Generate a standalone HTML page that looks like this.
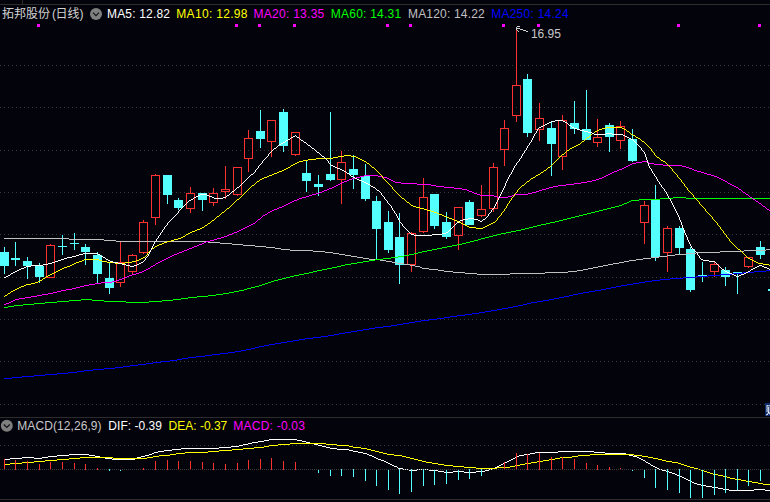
<!DOCTYPE html>
<html lang="zh-CN">
<head>
<meta charset="utf-8">
<title>拓邦股份 (日线)</title>
<style>
html,body{margin:0;padding:0;background:#03030c;}
body{width:770px;height:502px;position:relative;overflow:hidden;font-family:"Liberation Sans","Noto Sans CJK SC",sans-serif;font-size:12px;}
.t{position:absolute;white-space:nowrap;line-height:14px;height:14px;}
#hdr .t{top:7px;}
#mac .t{top:419px;}
.badge{position:absolute;left:765px;top:403px;width:5px;height:13px;background:#0a2b6c;overflow:hidden;}
.badge span{position:absolute;left:0.5px;top:1px;color:#fff;font-size:12px;line-height:13px;font-family:"WenQuanYi Zen Hei","Noto Sans CJK SC",sans-serif;}
</style>
</head>
<body>
<svg width="770" height="502" viewBox="0 0 770 502" shape-rendering="crispEdges" style="position:absolute;left:0;top:0">
<rect x="0" y="0" width="770" height="502" fill="#03030c"/>
<rect x="0" y="4" width="770" height="1" fill="#2c2c2c"/>
<rect x="22" y="0" width="1" height="4" fill="#2c2c2c"/>
<line x1="0" y1="65.5" x2="770" y2="65.5" stroke="#3a3a3a" stroke-width="1" stroke-dasharray="1 3"/>
<line x1="0" y1="107.5" x2="770" y2="107.5" stroke="#3a3a3a" stroke-width="1" stroke-dasharray="1 3"/>
<line x1="0" y1="150.5" x2="770" y2="150.5" stroke="#3a3a3a" stroke-width="1" stroke-dasharray="1 3"/>
<line x1="0" y1="192.5" x2="770" y2="192.5" stroke="#3a3a3a" stroke-width="1" stroke-dasharray="1 3"/>
<line x1="0" y1="234.5" x2="770" y2="234.5" stroke="#3a3a3a" stroke-width="1" stroke-dasharray="1 3"/>
<line x1="0" y1="277.5" x2="770" y2="277.5" stroke="#3a3a3a" stroke-width="1" stroke-dasharray="1 3"/>
<line x1="0" y1="319.5" x2="770" y2="319.5" stroke="#3a3a3a" stroke-width="1" stroke-dasharray="1 3"/>
<line x1="0" y1="361.5" x2="770" y2="361.5" stroke="#3a3a3a" stroke-width="1" stroke-dasharray="1 3"/>
<line x1="0" y1="404.5" x2="770" y2="404.5" stroke="#3a3a3a" stroke-width="1" stroke-dasharray="1 3"/>
<line x1="0" y1="445.5" x2="770" y2="445.5" stroke="#3a3a3a" stroke-width="1" stroke-dasharray="1 3"/>
<rect x="0" y="417" width="770" height="1" fill="#2c2c2c"/>
<rect x="0" y="499" width="770" height="1" fill="#2c2c2c"/>
<rect x="4" y="247" width="1" height="5" fill="#54ffff"/>
<rect x="4" y="266" width="1" height="8" fill="#54ffff"/>
<rect x="0" y="252" width="9" height="14" fill="#54ffff"/>
<rect x="15" y="242" width="1" height="16" fill="#54ffff"/>
<rect x="15" y="260" width="1" height="6" fill="#54ffff"/>
<rect x="11" y="258" width="9" height="2" fill="#54ffff"/>
<rect x="27" y="257" width="1" height="4" fill="#54ffff"/>
<rect x="27" y="266" width="1" height="13" fill="#54ffff"/>
<rect x="23" y="261" width="9" height="5" fill="#54ffff"/>
<rect x="39" y="263" width="1" height="3" fill="#54ffff"/>
<rect x="39" y="277" width="1" height="6" fill="#54ffff"/>
<rect x="35" y="266" width="9" height="11" fill="#54ffff"/>
<rect x="50" y="244" width="1" height="1" fill="#ff3232"/>
<rect x="46.5" y="245.5" width="8" height="32" fill="none" stroke="#ff3232" stroke-width="1"/>
<rect x="62" y="235" width="1" height="11" fill="#54ffff"/>
<rect x="62" y="247" width="1" height="8" fill="#54ffff"/>
<rect x="58" y="246" width="9" height="1" fill="#54ffff"/>
<rect x="74" y="233" width="1" height="10" fill="#54ffff"/>
<rect x="74" y="244" width="1" height="6" fill="#54ffff"/>
<rect x="70" y="243" width="9" height="1" fill="#54ffff"/>
<rect x="85" y="244" width="1" height="3" fill="#54ffff"/>
<rect x="85" y="252" width="1" height="13" fill="#54ffff"/>
<rect x="81" y="247" width="9" height="5" fill="#54ffff"/>
<rect x="97" y="252" width="1" height="3" fill="#54ffff"/>
<rect x="97" y="274" width="1" height="9" fill="#54ffff"/>
<rect x="93" y="255" width="9" height="19" fill="#54ffff"/>
<rect x="109" y="262" width="1" height="16" fill="#54ffff"/>
<rect x="109" y="288" width="1" height="6" fill="#54ffff"/>
<rect x="105" y="278" width="9" height="10" fill="#54ffff"/>
<rect x="120" y="242" width="1" height="20" fill="#ff3232"/>
<rect x="120" y="283" width="1" height="4" fill="#ff3232"/>
<rect x="116.5" y="262.5" width="8" height="20" fill="none" stroke="#ff3232" stroke-width="1"/>
<rect x="132" y="254" width="1" height="1" fill="#ff3232"/>
<rect x="132" y="272" width="1" height="3" fill="#ff3232"/>
<rect x="128.5" y="255.5" width="8" height="16" fill="none" stroke="#ff3232" stroke-width="1"/>
<rect x="143" y="220" width="1" height="2" fill="#ff3232"/>
<rect x="143" y="253" width="1" height="1" fill="#ff3232"/>
<rect x="139.5" y="222.5" width="8" height="30" fill="none" stroke="#ff3232" stroke-width="1"/>
<rect x="155" y="174" width="1" height="1" fill="#ff3232"/>
<rect x="155" y="218" width="1" height="7" fill="#ff3232"/>
<rect x="151.5" y="175.5" width="8" height="42" fill="none" stroke="#ff3232" stroke-width="1"/>
<rect x="167" y="195" width="1" height="9" fill="#54ffff"/>
<rect x="163" y="175" width="9" height="20" fill="#54ffff"/>
<rect x="178" y="198" width="1" height="2" fill="#54ffff"/>
<rect x="178" y="208" width="1" height="2" fill="#54ffff"/>
<rect x="174" y="200" width="9" height="8" fill="#54ffff"/>
<rect x="190" y="187" width="1" height="6" fill="#ff3232"/>
<rect x="190" y="209" width="1" height="4" fill="#ff3232"/>
<rect x="186.5" y="193.5" width="8" height="15" fill="none" stroke="#ff3232" stroke-width="1"/>
<rect x="202" y="200" width="1" height="11" fill="#54ffff"/>
<rect x="198" y="193" width="9" height="7" fill="#54ffff"/>
<rect x="213" y="188" width="1" height="5" fill="#ff3232"/>
<rect x="213" y="203" width="1" height="3" fill="#ff3232"/>
<rect x="209.5" y="193.5" width="8" height="9" fill="none" stroke="#ff3232" stroke-width="1"/>
<rect x="225" y="166" width="1" height="23" fill="#ff3232"/>
<rect x="225" y="192" width="1" height="7" fill="#ff3232"/>
<rect x="221.5" y="189.5" width="8" height="2" fill="none" stroke="#ff3232" stroke-width="1"/>
<rect x="237" y="195" width="1" height="1" fill="#ff3232"/>
<rect x="233.5" y="167.5" width="8" height="27" fill="none" stroke="#ff3232" stroke-width="1"/>
<rect x="248" y="130" width="1" height="8" fill="#ff3232"/>
<rect x="248" y="159" width="1" height="13" fill="#ff3232"/>
<rect x="244.5" y="138.5" width="8" height="20" fill="none" stroke="#ff3232" stroke-width="1"/>
<rect x="260" y="110" width="1" height="21" fill="#54ffff"/>
<rect x="260" y="139" width="1" height="9" fill="#54ffff"/>
<rect x="256" y="131" width="9" height="8" fill="#54ffff"/>
<rect x="271" y="142" width="1" height="15" fill="#ff3232"/>
<rect x="267.5" y="120.5" width="8" height="21" fill="none" stroke="#ff3232" stroke-width="1"/>
<rect x="283" y="109" width="1" height="3" fill="#54ffff"/>
<rect x="283" y="146" width="1" height="6" fill="#54ffff"/>
<rect x="279" y="112" width="9" height="34" fill="#54ffff"/>
<rect x="295" y="155" width="1" height="1" fill="#ff3232"/>
<rect x="291.5" y="132.5" width="8" height="22" fill="none" stroke="#ff3232" stroke-width="1"/>
<rect x="306" y="161" width="1" height="12" fill="#54ffff"/>
<rect x="306" y="181" width="1" height="11" fill="#54ffff"/>
<rect x="302" y="173" width="9" height="8" fill="#54ffff"/>
<rect x="318" y="175" width="1" height="9" fill="#54ffff"/>
<rect x="318" y="187" width="1" height="9" fill="#54ffff"/>
<rect x="314" y="184" width="9" height="3" fill="#54ffff"/>
<rect x="330" y="112" width="1" height="62" fill="#54ffff"/>
<rect x="330" y="180" width="1" height="1" fill="#54ffff"/>
<rect x="326" y="174" width="9" height="6" fill="#54ffff"/>
<rect x="341" y="151" width="1" height="11" fill="#ff3232"/>
<rect x="341" y="180" width="1" height="24" fill="#ff3232"/>
<rect x="337.5" y="162.5" width="8" height="17" fill="none" stroke="#ff3232" stroke-width="1"/>
<rect x="353" y="155" width="1" height="14" fill="#54ffff"/>
<rect x="353" y="175" width="1" height="14" fill="#54ffff"/>
<rect x="349" y="169" width="9" height="6" fill="#54ffff"/>
<rect x="365" y="164" width="1" height="12" fill="#54ffff"/>
<rect x="365" y="199" width="1" height="2" fill="#54ffff"/>
<rect x="361" y="176" width="9" height="23" fill="#54ffff"/>
<rect x="376" y="196" width="1" height="5" fill="#54ffff"/>
<rect x="376" y="229" width="1" height="31" fill="#54ffff"/>
<rect x="372" y="201" width="9" height="28" fill="#54ffff"/>
<rect x="388" y="211" width="1" height="11" fill="#54ffff"/>
<rect x="388" y="250" width="1" height="3" fill="#54ffff"/>
<rect x="384" y="222" width="9" height="28" fill="#54ffff"/>
<rect x="399" y="213" width="1" height="24" fill="#54ffff"/>
<rect x="399" y="265" width="1" height="19" fill="#54ffff"/>
<rect x="395" y="237" width="9" height="28" fill="#54ffff"/>
<rect x="411" y="232" width="1" height="1" fill="#ff3232"/>
<rect x="411" y="265" width="1" height="7" fill="#ff3232"/>
<rect x="407.5" y="233.5" width="8" height="31" fill="none" stroke="#ff3232" stroke-width="1"/>
<rect x="423" y="178" width="1" height="19" fill="#ff3232"/>
<rect x="423" y="232" width="1" height="1" fill="#ff3232"/>
<rect x="419.5" y="197.5" width="8" height="34" fill="none" stroke="#ff3232" stroke-width="1"/>
<rect x="434" y="226" width="1" height="3" fill="#54ffff"/>
<rect x="430" y="194" width="9" height="32" fill="#54ffff"/>
<rect x="446" y="212" width="1" height="10" fill="#54ffff"/>
<rect x="446" y="237" width="1" height="2" fill="#54ffff"/>
<rect x="442" y="222" width="9" height="15" fill="#54ffff"/>
<rect x="458" y="236" width="1" height="14" fill="#ff3232"/>
<rect x="454.5" y="207.5" width="8" height="28" fill="none" stroke="#ff3232" stroke-width="1"/>
<rect x="469" y="200" width="1" height="2" fill="#54ffff"/>
<rect x="465" y="202" width="9" height="23" fill="#54ffff"/>
<rect x="481" y="185" width="1" height="24" fill="#ff3232"/>
<rect x="481" y="216" width="1" height="1" fill="#ff3232"/>
<rect x="477.5" y="209.5" width="8" height="6" fill="none" stroke="#ff3232" stroke-width="1"/>
<rect x="493" y="163" width="1" height="4" fill="#ff3232"/>
<rect x="493" y="209" width="1" height="3" fill="#ff3232"/>
<rect x="489.5" y="167.5" width="8" height="41" fill="none" stroke="#ff3232" stroke-width="1"/>
<rect x="504" y="120" width="1" height="8" fill="#ff3232"/>
<rect x="504" y="150" width="1" height="16" fill="#ff3232"/>
<rect x="500.5" y="128.5" width="8" height="21" fill="none" stroke="#ff3232" stroke-width="1"/>
<rect x="516" y="30" width="1" height="55" fill="#ff3232"/>
<rect x="516" y="116" width="1" height="6" fill="#ff3232"/>
<rect x="512.5" y="85.5" width="8" height="30" fill="none" stroke="#ff3232" stroke-width="1"/>
<rect x="527" y="74" width="1" height="5" fill="#54ffff"/>
<rect x="527" y="133" width="1" height="4" fill="#54ffff"/>
<rect x="523" y="79" width="9" height="54" fill="#54ffff"/>
<rect x="539" y="103" width="1" height="15" fill="#ff3232"/>
<rect x="539" y="130" width="1" height="11" fill="#ff3232"/>
<rect x="535.5" y="118.5" width="8" height="11" fill="none" stroke="#ff3232" stroke-width="1"/>
<rect x="551" y="121" width="1" height="7" fill="#54ffff"/>
<rect x="551" y="144" width="1" height="32" fill="#54ffff"/>
<rect x="547" y="128" width="9" height="16" fill="#54ffff"/>
<rect x="562" y="115" width="1" height="5" fill="#ff3232"/>
<rect x="562" y="157" width="1" height="13" fill="#ff3232"/>
<rect x="558.5" y="120.5" width="8" height="36" fill="none" stroke="#ff3232" stroke-width="1"/>
<rect x="574" y="101" width="1" height="22" fill="#54ffff"/>
<rect x="574" y="129" width="1" height="5" fill="#54ffff"/>
<rect x="570" y="123" width="9" height="6" fill="#54ffff"/>
<rect x="586" y="90" width="1" height="39" fill="#54ffff"/>
<rect x="582" y="129" width="9" height="11" fill="#54ffff"/>
<rect x="597" y="119" width="1" height="18" fill="#ff3232"/>
<rect x="597" y="143" width="1" height="4" fill="#ff3232"/>
<rect x="593.5" y="137.5" width="8" height="5" fill="none" stroke="#ff3232" stroke-width="1"/>
<rect x="609" y="123" width="1" height="2" fill="#54ffff"/>
<rect x="609" y="137" width="1" height="15" fill="#54ffff"/>
<rect x="605" y="125" width="9" height="12" fill="#54ffff"/>
<rect x="620" y="121" width="1" height="5" fill="#ff3232"/>
<rect x="620" y="141" width="1" height="8" fill="#ff3232"/>
<rect x="616.5" y="126.5" width="8" height="14" fill="none" stroke="#ff3232" stroke-width="1"/>
<rect x="632" y="129" width="1" height="10" fill="#54ffff"/>
<rect x="632" y="161" width="1" height="1" fill="#54ffff"/>
<rect x="628" y="139" width="9" height="22" fill="#54ffff"/>
<rect x="644" y="201" width="1" height="4" fill="#ff3232"/>
<rect x="644" y="223" width="1" height="21" fill="#ff3232"/>
<rect x="640.5" y="205.5" width="8" height="17" fill="none" stroke="#ff3232" stroke-width="1"/>
<rect x="655" y="185" width="1" height="15" fill="#54ffff"/>
<rect x="655" y="257" width="1" height="4" fill="#54ffff"/>
<rect x="651" y="200" width="9" height="57" fill="#54ffff"/>
<rect x="667" y="226" width="1" height="2" fill="#ff3232"/>
<rect x="667" y="253" width="1" height="19" fill="#ff3232"/>
<rect x="663.5" y="228.5" width="8" height="24" fill="none" stroke="#ff3232" stroke-width="1"/>
<rect x="679" y="226" width="1" height="2" fill="#54ffff"/>
<rect x="679" y="248" width="1" height="6" fill="#54ffff"/>
<rect x="675" y="228" width="9" height="20" fill="#54ffff"/>
<rect x="690" y="247" width="1" height="2" fill="#54ffff"/>
<rect x="690" y="290" width="1" height="2" fill="#54ffff"/>
<rect x="686" y="249" width="9" height="41" fill="#54ffff"/>
<rect x="702" y="262" width="1" height="13" fill="#54ffff"/>
<rect x="702" y="277" width="1" height="5" fill="#54ffff"/>
<rect x="698" y="275" width="9" height="2" fill="#54ffff"/>
<rect x="714" y="262" width="1" height="2" fill="#ff3232"/>
<rect x="714" y="272" width="1" height="5" fill="#ff3232"/>
<rect x="710.5" y="264.5" width="8" height="7" fill="none" stroke="#ff3232" stroke-width="1"/>
<rect x="725" y="267" width="1" height="3" fill="#54ffff"/>
<rect x="725" y="277" width="1" height="9" fill="#54ffff"/>
<rect x="721" y="270" width="9" height="7" fill="#54ffff"/>
<rect x="737" y="274" width="1" height="20" fill="#54ffff"/>
<rect x="733" y="272" width="9" height="2" fill="#54ffff"/>
<rect x="748" y="267" width="1" height="1" fill="#ff3232"/>
<rect x="744.5" y="257.5" width="8" height="9" fill="none" stroke="#ff3232" stroke-width="1"/>
<rect x="760" y="241" width="1" height="6" fill="#54ffff"/>
<rect x="760" y="255" width="1" height="4" fill="#54ffff"/>
<rect x="756" y="247" width="9" height="8" fill="#54ffff"/>
<rect x="768" y="289" width="9" height="2" fill="#54ffff"/>
<path d="M766 270.5h4M754 271.5h12M743 272.5h11M733 273.5h10M720 274.5h13M708 275.5h12M696 276.5h12M683 277.5h13M670 278.5h13M660 279.5h10M652 280.5h8M645 281.5h7M639 282.5h6M633 283.5h6M627 284.5h6M621 285.5h6M616 286.5h5M611 287.5h5M606 288.5h5M601 289.5h5M595 290.5h6M589 291.5h6M583 292.5h6M578 293.5h5M573 294.5h5M569 295.5h4M564 296.5h5M559 297.5h5M554 298.5h5M549 299.5h5M543 300.5h6M537 301.5h6M531 302.5h6M527 303.5h4M523 304.5h4M518 305.5h5M513 306.5h5M508 307.5h5M502 308.5h6M497 309.5h5M491 310.5h6M485 311.5h6M479 312.5h6M472 313.5h7M465 314.5h7M457 315.5h8M450 316.5h7M444 317.5h6M437 318.5h7M429 319.5h8M421 320.5h8M415 321.5h6M409 322.5h6M403 323.5h6M397 324.5h6M391 325.5h6M383 326.5h8M375 327.5h8M369 328.5h6M363 329.5h6M357 330.5h6M351 331.5h6M345 332.5h6M339 333.5h6M334 334.5h5M328 335.5h6M321 336.5h7M313 337.5h8M305 338.5h8M299 339.5h6M293 340.5h6M287 341.5h6M281 342.5h6M275 343.5h6M269 344.5h6M264 345.5h5M259 346.5h5M255 347.5h4M251 348.5h4M246 349.5h5M241 350.5h5M235 351.5h6M228 352.5h7M220 353.5h8M212 354.5h8M205 355.5h7M196 356.5h9M188 357.5h8M182 358.5h6M177 359.5h5M170 360.5h7M161 361.5h9M153 362.5h8M146 363.5h7M138 364.5h8M130 365.5h8M123 366.5h7M115 367.5h8M104 368.5h11M93 369.5h11M84 370.5h9M77 371.5h7M68 372.5h9M57 373.5h11M45 374.5h12M34 375.5h11M22 376.5h12M12 377.5h10M4 378.5h8" fill="none" stroke="#0000ff" stroke-width="1"/>
<path d="M4 238.5h65M69 239.5h35M104 240.5h12M116 241.5h92M208 242.5h12M220 243.5h12M232 244.5h11M243 245.5h12M255 246.5h11M266 247.5h9M275 248.5h6M281 249.5h9M766 249.5h4M290 250.5h23M744 250.5h22M313 251.5h12M720 251.5h24M325 252.5h8M696 252.5h24M333 253.5h6M686 253.5h10M339 254.5h6M675 254.5h11M345 255.5h6M667 255.5h8M351 256.5h6M659 256.5h8M357 257.5h6M651 257.5h8M363 258.5h6M643 258.5h8M369 259.5h11M636 259.5h7M380 260.5h6M629 260.5h7M386 261.5h6M624 261.5h5M392 262.5h5M619 262.5h5M397 263.5h7M613 263.5h6M404 264.5h6M608 264.5h5M410 265.5h5M603 265.5h5M415 266.5h5M598 266.5h5M420 267.5h2M593 267.5h5M422 268.5h7M588 268.5h5M429 269.5h9M583 269.5h5M438 270.5h6M577 270.5h6M444 271.5h9M568 271.5h9M453 272.5h12M545 272.5h23M465 273.5h12M510 273.5h35M477 274.5h33" fill="none" stroke="#c0c0c0" stroke-width="1"/>
<path d="M673 197.5h13M660 198.5h13M686 198.5h84M639 199.5h21M631 200.5h8M629 201.5h2M627 202.5h2M624 203.5h3M622 204.5h2M619 205.5h3M615 206.5h4M611 207.5h4M607 208.5h4M603 209.5h4M599 210.5h4M595 211.5h4M591 212.5h4M587 213.5h4M583 214.5h4M579 215.5h4M575 216.5h4M571 217.5h4M567 218.5h4M563 219.5h4M559 220.5h4M555 221.5h4M550 222.5h5M546 223.5h4M541 224.5h5M537 225.5h4M533 226.5h4M529 227.5h4M525 228.5h4M521 229.5h4M516 230.5h5M511 231.5h5M506 232.5h5M501 233.5h5M497 234.5h4M493 235.5h4M489 236.5h4M485 237.5h4M481 238.5h4M478 239.5h3M474 240.5h4M470 241.5h4M466 242.5h4M462 243.5h4M457 244.5h5M452 245.5h5M447 246.5h5M442 247.5h5M437 248.5h5M432 249.5h5M427 250.5h5M422 251.5h5M418 252.5h4M414 253.5h4M409 254.5h5M404 255.5h5M398 256.5h6M391 257.5h7M383 258.5h8M375 259.5h8M369 260.5h6M363 261.5h6M357 262.5h6M351 263.5h6M345 264.5h6M341 265.5h4M337 266.5h4M332 267.5h5M327 268.5h5M322 269.5h5M317 270.5h5M313 271.5h4M309 272.5h4M304 273.5h5M299 274.5h5M294 275.5h5M290 276.5h4M286 277.5h4M282 278.5h4M278 279.5h4M274 280.5h4M271 281.5h3M268 282.5h3M265 283.5h3M262 284.5h3M259 285.5h3M255 286.5h4M251 287.5h4M247 288.5h4M244 289.5h3M239 290.5h5M234 291.5h5M229 292.5h5M223 293.5h6M216 294.5h7M208 295.5h8M197 296.5h11M188 297.5h9M181 298.5h7M81 299.5h11M173 299.5h8M69 300.5h12M92 300.5h12M162 300.5h11M57 301.5h12M104 301.5h22M149 301.5h13M45 302.5h12M126 302.5h23M34 303.5h11M23 304.5h11M14 305.5h9M8 306.5h6M4 307.5h4" fill="none" stroke="#00ff00" stroke-width="1"/>
<path d="M642 161.5h5M636 162.5h6M647 162.5h2M632 163.5h4M649 163.5h5M630 164.5h2M654 164.5h9M628 165.5h2M663 165.5h19M626 166.5h2M682 166.5h4M624 167.5h2M686 167.5h3M622 168.5h2M689 168.5h3M619 169.5h3M692 169.5h2M617 170.5h2M694 170.5h3M614 171.5h3M697 171.5h4M612 172.5h2M701 172.5h3M610 173.5h2M704 173.5h3M608 174.5h2M707 174.5h4M364 175.5h14M606 175.5h2M711 175.5h3M360 176.5h4M378 176.5h5M604 176.5h2M714 176.5h3M356 177.5h4M383 177.5h4M602 177.5h2M717 177.5h2M352 178.5h4M387 178.5h2M599 178.5h3M719 178.5h2M349 179.5h3M389 179.5h2M596 179.5h3M721 179.5h2M347 180.5h2M391 180.5h2M592 180.5h4M723 180.5h2M344 181.5h3M393 181.5h2M587 181.5h5M725 181.5h2M342 182.5h2M395 182.5h6M581 182.5h6M727 182.5h1M340 183.5h2M401 183.5h16M574 183.5h7M728 183.5h2M338 184.5h2M417 184.5h14M566 184.5h8M730 184.5h2M336 185.5h2M431 185.5h5M558 185.5h8M732 185.5h2M334 186.5h2M436 186.5h8M553 186.5h5M734 186.5h2M332 187.5h2M444 187.5h10M549 187.5h4M736 187.5h2M329 188.5h3M454 188.5h8M546 188.5h3M738 188.5h1M327 189.5h2M462 189.5h5M542 189.5h4M739 189.5h2M324 190.5h3M467 190.5h2M539 190.5h3M741 190.5h1M322 191.5h2M469 191.5h3M536 191.5h3M742 191.5h1M319 192.5h3M472 192.5h2M532 192.5h4M743 192.5h2M316 193.5h3M474 193.5h3M528 193.5h4M745 193.5h1M312 194.5h4M477 194.5h3M514 194.5h14M746 194.5h2M309 195.5h3M480 195.5h14M512 195.5h2M748 195.5h1M306 196.5h3M494 196.5h3M508 196.5h4M749 196.5h1M302 197.5h4M497 197.5h11M750 197.5h2M299 198.5h3M752 198.5h1M297 199.5h2M753 199.5h2M294 200.5h3M755 200.5h1M292 201.5h2M756 201.5h2M290 202.5h2M758 202.5h1M288 203.5h2M759 203.5h2M286 204.5h2M761 204.5h1M284 205.5h2M762 205.5h1M282 206.5h2M763 206.5h2M279 207.5h3M765 207.5h1M277 208.5h2M766 208.5h1M274 209.5h3M767 209.5h2M272 210.5h2M769 210.5h1M270 211.5h2M268 212.5h2M267 213.5h1M265 214.5h2M263 215.5h2M262 216.5h1M261 217.5h1M260 218.5h1M258 219.5h2M257 220.5h1M256 221.5h1M255 222.5h1M253 223.5h2M251 224.5h2M249 225.5h2M247 226.5h2M245 227.5h2M243 228.5h2M241 229.5h2M239 230.5h2M237 231.5h2M234 232.5h3M232 233.5h2M229 234.5h3M227 235.5h2M224 236.5h3M221 237.5h3M217 238.5h4M214 239.5h3M210 240.5h4M206 241.5h4M204 242.5h2M202 243.5h2M199 244.5h3M197 245.5h2M194 246.5h3M192 247.5h2M189 248.5h3M187 249.5h2M184 250.5h3M182 251.5h2M179 252.5h3M177 253.5h2M174 254.5h3M172 255.5h2M170 256.5h2M168 257.5h2M166 258.5h2M164 259.5h2M162 260.5h2M160 261.5h2M158 262.5h2M156 263.5h2M155 264.5h1M153 265.5h2M151 266.5h2M150 267.5h1M148 268.5h2M146 269.5h2M144 270.5h2M142 271.5h2M139 272.5h3M136 273.5h3M132 274.5h4M129 275.5h3M127 276.5h2M124 277.5h3M122 278.5h2M119 279.5h3M116 280.5h3M112 281.5h4M101 282.5h11M95 283.5h6M89 284.5h6M84 285.5h5M80 286.5h4M76 287.5h4M72 288.5h4M66 289.5h6M61 290.5h5M57 291.5h4M53 292.5h4M48 293.5h5M42 294.5h6M37 295.5h5M31 296.5h6M25 297.5h6M19 298.5h6M15 299.5h4M13 300.5h2M11 301.5h2M9 302.5h2M6 303.5h3M4 304.5h2" fill="none" stroke="#ff00ff" stroke-width="1"/>
<path d="M606 127.5h16M602 128.5h4M622 128.5h2M599 129.5h3M624 129.5h2M597 130.5h2M626 130.5h1M595 131.5h2M627 131.5h2M594 132.5h1M629 132.5h1M592 133.5h2M630 133.5h1M591 134.5h1M631 134.5h2M590 135.5h1M633 135.5h2M589 136.5h1M635 136.5h1M587 137.5h2M636 137.5h2M586 138.5h1M638 138.5h2M585 139.5h1M640 139.5h1M584 140.5h1M641 140.5h1M582 141.5h2M642 141.5h2M581 142.5h1M644 142.5h1M580 143.5h1M645 143.5h1M578 144.5h2M646 144.5h1M576 145.5h2M647 145.5h1M574 146.5h2M648 146.5h1M572 147.5h2M649 147.5h1M570 148.5h2M650 148.5h1M569 149.5h1M651 149.5h1M567 150.5h2M651 150.5h1M566 151.5h1M652 151.5h1M565 152.5h1M653 152.5h1M564 153.5h1M654 153.5h1M562 154.5h2M654 154.5h1M344 155.5h7M561 155.5h1M655 155.5h1M338 156.5h6M351 156.5h5M560 156.5h1M656 156.5h1M333 157.5h5M356 157.5h2M559 157.5h1M657 157.5h2M316 158.5h17M358 158.5h2M558 158.5h1M659 158.5h1M308 159.5h8M360 159.5h2M557 159.5h1M660 159.5h1M303 160.5h5M362 160.5h2M556 160.5h1M661 160.5h2M299 161.5h4M364 161.5h2M555 161.5h1M663 161.5h2M297 162.5h2M366 162.5h1M554 162.5h1M665 162.5h1M295 163.5h2M367 163.5h2M553 163.5h1M666 163.5h1M293 164.5h2M369 164.5h1M552 164.5h1M667 164.5h1M291 165.5h2M370 165.5h1M551 165.5h1M668 165.5h1M290 166.5h1M371 166.5h1M550 166.5h1M669 166.5h1M288 167.5h2M372 167.5h2M548 167.5h2M670 167.5h1M286 168.5h2M374 168.5h1M547 168.5h1M671 168.5h1M284 169.5h2M375 169.5h1M546 169.5h1M672 169.5h1M282 170.5h2M376 170.5h1M544 170.5h2M672 170.5h1M279 171.5h3M377 171.5h1M543 171.5h1M673 171.5h1M277 172.5h2M378 172.5h1M541 172.5h2M674 172.5h1M274 173.5h3M379 173.5h1M540 173.5h1M675 173.5h1M272 174.5h2M380 174.5h1M538 174.5h2M676 174.5h1M269 175.5h3M381 175.5h1M536 175.5h2M677 175.5h1M267 176.5h2M382 176.5h1M535 176.5h1M677 176.5h1M264 177.5h3M382 177.5h1M533 177.5h2M678 177.5h1M262 178.5h2M383 178.5h1M531 178.5h2M679 178.5h1M260 179.5h2M384 179.5h1M530 179.5h1M680 179.5h1M259 180.5h1M385 180.5h1M529 180.5h1M681 180.5h1M257 181.5h2M386 181.5h1M527 181.5h2M681 181.5h1M256 182.5h1M387 182.5h1M526 182.5h1M682 182.5h1M255 183.5h1M388 183.5h1M525 183.5h1M683 183.5h1M254 184.5h1M389 184.5h1M524 184.5h1M684 184.5h1M252 185.5h2M390 185.5h1M522 185.5h2M684 185.5h1M251 186.5h1M391 186.5h1M521 186.5h1M685 186.5h1M250 187.5h1M392 187.5h1M520 187.5h1M686 187.5h1M249 188.5h1M392 188.5h1M519 188.5h1M687 188.5h1M248 189.5h1M393 189.5h1M518 189.5h1M687 189.5h1M247 190.5h1M394 190.5h1M517 190.5h1M688 190.5h1M246 191.5h1M395 191.5h1M517 191.5h1M689 191.5h1M245 192.5h1M396 192.5h1M516 192.5h1M690 192.5h1M244 193.5h1M397 193.5h1M515 193.5h1M691 193.5h1M243 194.5h1M398 194.5h1M514 194.5h1M692 194.5h1M242 195.5h1M399 195.5h1M514 195.5h1M693 195.5h1M241 196.5h1M400 196.5h1M513 196.5h1M693 196.5h1M240 197.5h1M401 197.5h1M512 197.5h1M694 197.5h1M239 198.5h1M402 198.5h2M511 198.5h1M695 198.5h1M237 199.5h2M404 199.5h1M511 199.5h1M696 199.5h1M236 200.5h1M405 200.5h1M510 200.5h1M697 200.5h1M235 201.5h1M406 201.5h1M509 201.5h1M698 201.5h1M234 202.5h1M407 202.5h2M509 202.5h1M699 202.5h1M233 203.5h1M409 203.5h1M508 203.5h1M699 203.5h1M232 204.5h1M410 204.5h1M507 204.5h1M700 204.5h1M231 205.5h1M411 205.5h2M507 205.5h1M701 205.5h1M230 206.5h1M413 206.5h3M506 206.5h1M702 206.5h1M229 207.5h1M416 207.5h4M506 207.5h1M703 207.5h1M227 208.5h2M420 208.5h4M505 208.5h1M704 208.5h1M226 209.5h1M424 209.5h3M504 209.5h1M705 209.5h1M225 210.5h1M427 210.5h4M504 210.5h1M705 210.5h1M224 211.5h1M431 211.5h3M503 211.5h1M706 211.5h1M222 212.5h2M434 212.5h3M502 212.5h1M707 212.5h1M221 213.5h1M437 213.5h2M501 213.5h1M708 213.5h1M220 214.5h1M439 214.5h3M501 214.5h1M709 214.5h1M219 215.5h1M442 215.5h2M500 215.5h1M710 215.5h1M217 216.5h2M444 216.5h3M499 216.5h1M711 216.5h1M216 217.5h1M447 217.5h2M498 217.5h1M712 217.5h1M215 218.5h1M449 218.5h3M497 218.5h1M712 218.5h1M214 219.5h1M452 219.5h2M497 219.5h1M713 219.5h1M212 220.5h2M454 220.5h3M496 220.5h1M714 220.5h1M211 221.5h1M457 221.5h2M495 221.5h1M715 221.5h1M210 222.5h1M459 222.5h2M493 222.5h2M716 222.5h1M208 223.5h2M461 223.5h2M491 223.5h2M717 223.5h1M207 224.5h1M463 224.5h2M489 224.5h2M717 224.5h1M205 225.5h2M465 225.5h2M487 225.5h2M718 225.5h1M204 226.5h1M467 226.5h2M485 226.5h2M719 226.5h1M202 227.5h2M469 227.5h7M483 227.5h2M720 227.5h1M200 228.5h2M476 228.5h7M720 228.5h1M197 229.5h3M721 229.5h1M195 230.5h2M722 230.5h1M192 231.5h3M723 231.5h1M190 232.5h2M723 232.5h1M188 233.5h2M724 233.5h1M186 234.5h2M725 234.5h1M185 235.5h1M726 235.5h1M183 236.5h2M726 236.5h1M181 237.5h2M727 237.5h1M178 238.5h3M728 238.5h1M174 239.5h4M729 239.5h1M171 240.5h3M729 240.5h1M167 241.5h4M730 241.5h1M164 242.5h3M731 242.5h1M162 243.5h2M732 243.5h1M159 244.5h3M733 244.5h1M157 245.5h2M734 245.5h1M155 246.5h2M735 246.5h1M154 247.5h1M736 247.5h1M152 248.5h2M737 248.5h1M151 249.5h1M738 249.5h2M150 250.5h1M740 250.5h1M149 251.5h1M741 251.5h1M148 252.5h1M742 252.5h1M147 253.5h1M743 253.5h1M147 254.5h1M744 254.5h1M146 255.5h1M745 255.5h1M145 256.5h1M746 256.5h1M143 257.5h2M747 257.5h1M141 258.5h2M748 258.5h2M84 259.5h15M139 259.5h2M750 259.5h2M82 260.5h2M99 260.5h3M136 260.5h3M752 260.5h2M79 261.5h3M102 261.5h5M132 261.5h4M754 261.5h2M76 262.5h3M107 262.5h8M125 262.5h7M756 262.5h2M74 263.5h2M115 263.5h10M758 263.5h5M72 264.5h2M763 264.5h6M70 265.5h2M769 265.5h1M67 266.5h3M64 267.5h3M62 268.5h2M60 269.5h2M58 270.5h2M56 271.5h2M54 272.5h2M52 273.5h2M50 274.5h2M48 275.5h2M46 276.5h2M45 277.5h1M43 278.5h2M42 279.5h1M40 280.5h2M38 281.5h2M35 282.5h3M31 283.5h4M26 284.5h5M24 285.5h2M21 286.5h3M19 287.5h2M17 288.5h2M15 289.5h2M13 290.5h2M11 291.5h2M10 292.5h1M8 293.5h2M7 294.5h1M5 295.5h2M4 296.5h1" fill="none" stroke="#ffff00" stroke-width="1"/>
<path d="M555 120.5h8M551 121.5h4M563 121.5h2M549 122.5h2M565 122.5h2M547 123.5h2M567 123.5h1M545 124.5h2M568 124.5h1M543 125.5h2M569 125.5h2M541 126.5h2M571 126.5h1M539 127.5h2M572 127.5h2M538 128.5h1M574 128.5h3M537 129.5h1M577 129.5h3M537 130.5h1M580 130.5h4M536 131.5h1M584 131.5h4M536 132.5h1M588 132.5h4M535 133.5h1M592 133.5h2M606 133.5h6M534 134.5h1M594 134.5h12M612 134.5h11M295 135.5h1M534 135.5h1M623 135.5h2M293 136.5h2M296 136.5h1M533 136.5h1M625 136.5h2M291 137.5h2M297 137.5h2M533 137.5h1M627 137.5h2M290 138.5h1M299 138.5h1M532 138.5h1M629 138.5h2M288 139.5h2M300 139.5h1M532 139.5h1M631 139.5h2M286 140.5h2M301 140.5h2M531 140.5h1M633 140.5h1M285 141.5h1M303 141.5h1M531 141.5h1M634 141.5h1M283 142.5h2M304 142.5h2M530 142.5h1M635 142.5h1M281 143.5h2M306 143.5h1M529 143.5h1M636 143.5h1M279 144.5h2M307 144.5h1M529 144.5h1M637 144.5h1M278 145.5h1M308 145.5h2M528 145.5h1M638 145.5h1M277 146.5h1M310 146.5h1M527 146.5h1M639 146.5h1M276 147.5h1M311 147.5h1M527 147.5h1M640 147.5h1M274 148.5h2M312 148.5h2M526 148.5h1M641 148.5h1M273 149.5h1M314 149.5h1M526 149.5h1M641 149.5h1M272 150.5h1M315 150.5h1M525 150.5h1M642 150.5h1M271 151.5h1M316 151.5h1M524 151.5h1M643 151.5h1M270 152.5h1M317 152.5h2M524 152.5h1M644 152.5h1M269 153.5h1M319 153.5h1M523 153.5h1M644 153.5h1M268 154.5h1M320 154.5h1M522 154.5h1M645 154.5h1M268 155.5h1M321 155.5h1M522 155.5h1M645 155.5h1M267 156.5h1M322 156.5h2M521 156.5h1M645 156.5h1M266 157.5h1M324 157.5h1M521 157.5h1M646 157.5h1M265 158.5h1M325 158.5h1M520 158.5h1M646 158.5h1M264 159.5h1M326 159.5h1M519 159.5h1M646 159.5h1M263 160.5h1M327 160.5h1M519 160.5h1M647 160.5h1M262 161.5h1M328 161.5h1M518 161.5h1M647 161.5h1M262 162.5h1M328 162.5h1M517 162.5h1M647 162.5h1M261 163.5h1M329 163.5h1M516 163.5h1M648 163.5h1M260 164.5h1M330 164.5h1M516 164.5h1M648 164.5h1M259 165.5h1M331 165.5h2M515 165.5h1M648 165.5h1M258 166.5h1M333 166.5h2M514 166.5h1M649 166.5h1M258 167.5h1M335 167.5h2M514 167.5h1M649 167.5h1M257 168.5h1M337 168.5h3M513 168.5h1M650 168.5h1M256 169.5h1M340 169.5h2M513 169.5h1M651 169.5h1M255 170.5h1M342 170.5h2M512 170.5h1M651 170.5h1M255 171.5h1M344 171.5h2M512 171.5h1M652 171.5h1M254 172.5h1M346 172.5h1M511 172.5h1M652 172.5h1M253 173.5h1M347 173.5h2M511 173.5h1M653 173.5h1M251 174.5h2M349 174.5h1M510 174.5h1M654 174.5h1M250 175.5h1M350 175.5h1M509 175.5h1M654 175.5h1M249 176.5h1M351 176.5h2M509 176.5h1M655 176.5h1M248 177.5h1M353 177.5h2M508 177.5h1M656 177.5h1M247 178.5h1M355 178.5h2M508 178.5h1M656 178.5h1M246 179.5h1M357 179.5h2M507 179.5h1M657 179.5h1M245 180.5h1M359 180.5h3M507 180.5h1M657 180.5h1M244 181.5h1M362 181.5h2M506 181.5h1M658 181.5h1M243 182.5h1M364 182.5h2M506 182.5h1M659 182.5h1M242 183.5h1M366 183.5h2M505 183.5h1M659 183.5h1M241 184.5h1M368 184.5h2M505 184.5h1M660 184.5h1M240 185.5h1M370 185.5h1M505 185.5h1M661 185.5h1M239 186.5h1M371 186.5h2M504 186.5h1M661 186.5h1M237 187.5h2M373 187.5h2M504 187.5h1M662 187.5h1M236 188.5h1M375 188.5h1M503 188.5h1M663 188.5h1M235 189.5h1M376 189.5h1M503 189.5h1M664 189.5h1M234 190.5h1M377 190.5h2M502 190.5h1M664 190.5h1M232 191.5h2M379 191.5h1M502 191.5h1M665 191.5h1M231 192.5h1M380 192.5h1M501 192.5h1M666 192.5h1M230 193.5h1M381 193.5h1M501 193.5h1M666 193.5h1M200 194.5h7M229 194.5h1M381 194.5h1M500 194.5h1M667 194.5h1M198 195.5h2M207 195.5h2M227 195.5h2M382 195.5h1M500 195.5h1M667 195.5h1M196 196.5h2M209 196.5h3M226 196.5h1M383 196.5h1M499 196.5h1M668 196.5h1M194 197.5h2M212 197.5h2M223 197.5h3M384 197.5h1M499 197.5h1M668 197.5h1M193 198.5h1M214 198.5h9M384 198.5h1M498 198.5h1M669 198.5h1M191 199.5h2M385 199.5h1M498 199.5h1M670 199.5h1M189 200.5h2M386 200.5h1M497 200.5h1M670 200.5h1M188 201.5h1M387 201.5h1M497 201.5h1M671 201.5h1M187 202.5h1M387 202.5h1M496 202.5h1M671 202.5h1M186 203.5h1M388 203.5h1M496 203.5h1M672 203.5h1M185 204.5h1M389 204.5h1M495 204.5h1M672 204.5h1M184 205.5h1M390 205.5h1M495 205.5h1M673 205.5h1M183 206.5h1M391 206.5h1M494 206.5h1M673 206.5h1M182 207.5h1M391 207.5h1M494 207.5h1M674 207.5h1M181 208.5h1M392 208.5h1M493 208.5h1M674 208.5h1M180 209.5h1M392 209.5h1M492 209.5h1M675 209.5h1M179 210.5h1M393 210.5h1M491 210.5h1M675 210.5h1M178 211.5h1M394 211.5h1M491 211.5h1M676 211.5h1M178 212.5h1M394 212.5h1M490 212.5h1M676 212.5h1M177 213.5h1M395 213.5h1M489 213.5h1M677 213.5h1M176 214.5h1M396 214.5h1M488 214.5h1M677 214.5h1M175 215.5h1M396 215.5h1M488 215.5h1M678 215.5h1M174 216.5h1M397 216.5h1M487 216.5h1M678 216.5h1M173 217.5h1M397 217.5h1M486 217.5h1M679 217.5h1M172 218.5h1M398 218.5h1M468 218.5h6M485 218.5h1M679 218.5h1M171 219.5h1M398 219.5h1M463 219.5h5M474 219.5h4M483 219.5h2M679 219.5h1M170 220.5h1M399 220.5h1M460 220.5h3M478 220.5h2M482 220.5h1M680 220.5h1M169 221.5h1M399 221.5h1M459 221.5h1M480 221.5h2M680 221.5h1M168 222.5h1M400 222.5h1M457 222.5h2M681 222.5h1M167 223.5h1M401 223.5h1M456 223.5h1M681 223.5h1M167 224.5h1M402 224.5h1M455 224.5h1M681 224.5h1M166 225.5h1M402 225.5h1M454 225.5h1M682 225.5h1M165 226.5h1M403 226.5h1M453 226.5h1M682 226.5h1M164 227.5h1M404 227.5h1M452 227.5h1M682 227.5h1M164 228.5h1M405 228.5h1M451 228.5h1M683 228.5h1M163 229.5h1M406 229.5h1M450 229.5h1M683 229.5h1M162 230.5h1M407 230.5h1M449 230.5h1M684 230.5h1M162 231.5h1M408 231.5h1M448 231.5h1M684 231.5h1M161 232.5h1M409 232.5h1M446 232.5h2M684 232.5h1M160 233.5h1M410 233.5h1M442 233.5h4M685 233.5h1M160 234.5h1M411 234.5h3M432 234.5h10M685 234.5h1M159 235.5h1M414 235.5h18M686 235.5h1M158 236.5h1M686 236.5h1M158 237.5h1M687 237.5h1M157 238.5h1M687 238.5h1M156 239.5h1M687 239.5h1M156 240.5h1M688 240.5h1M155 241.5h1M688 241.5h1M154 242.5h1M689 242.5h1M154 243.5h1M689 243.5h1M153 244.5h1M690 244.5h1M153 245.5h1M690 245.5h1M152 246.5h1M691 246.5h1M152 247.5h1M691 247.5h1M151 248.5h1M692 248.5h1M151 249.5h1M693 249.5h1M150 250.5h1M694 250.5h1M150 251.5h1M695 251.5h1M149 252.5h1M696 252.5h1M83 253.5h15M149 253.5h1M697 253.5h1M79 254.5h4M98 254.5h2M148 254.5h1M697 254.5h1M76 255.5h3M100 255.5h1M148 255.5h1M698 255.5h1M72 256.5h4M101 256.5h2M147 256.5h1M699 256.5h1M67 257.5h5M103 257.5h2M146 257.5h1M699 257.5h1M64 258.5h3M105 258.5h1M145 258.5h1M700 258.5h1M61 259.5h3M106 259.5h2M145 259.5h1M701 259.5h2M58 260.5h3M108 260.5h2M144 260.5h1M703 260.5h6M55 261.5h3M110 261.5h3M143 261.5h1M709 261.5h6M52 262.5h3M113 262.5h5M141 262.5h2M715 262.5h1M48 263.5h4M118 263.5h4M139 263.5h2M716 263.5h1M43 264.5h5M122 264.5h4M137 264.5h2M717 264.5h1M31 265.5h12M126 265.5h4M134 265.5h3M718 265.5h1M759 265.5h3M26 266.5h5M130 266.5h4M719 266.5h1M757 266.5h2M762 266.5h2M24 267.5h2M720 267.5h1M755 267.5h2M764 267.5h3M21 268.5h3M721 268.5h1M753 268.5h2M767 268.5h2M19 269.5h2M722 269.5h2M751 269.5h2M769 269.5h1M17 270.5h2M724 270.5h1M750 270.5h1M15 271.5h2M725 271.5h2M748 271.5h2M13 272.5h2M727 272.5h2M746 272.5h2M11 273.5h2M729 273.5h3M744 273.5h2M10 274.5h1M732 274.5h2M741 274.5h3M8 275.5h2M734 275.5h2M739 275.5h2M6 276.5h2M736 276.5h3M4 277.5h2" fill="none" stroke="#ffffff" stroke-width="1"/>
<rect x="37" y="24" width="3" height="3" fill="#ff00ff"/>
<rect x="235" y="24" width="3" height="3" fill="#ff00ff"/>
<rect x="258" y="24" width="3" height="3" fill="#ff00ff"/>
<rect x="293" y="24" width="3" height="3" fill="#ff00ff"/>
<rect x="386" y="24" width="3" height="3" fill="#ff00ff"/>
<rect x="409" y="24" width="3" height="3" fill="#ff00ff"/>
<rect x="502" y="24" width="3" height="3" fill="#ff00ff"/>
<rect x="537" y="24" width="3" height="3" fill="#ff00ff"/>
<rect x="677" y="24" width="3" height="3" fill="#ff00ff"/>
<rect x="758" y="24" width="3" height="3" fill="#ff00ff"/>
<path d="M269 439.5h28M264 440.5h5M297 440.5h5M258 441.5h6M302 441.5h4M252 442.5h6M306 442.5h4M248 443.5h4M310 443.5h4M243 444.5h5M314 444.5h4M239 445.5h4M318 445.5h4M231 446.5h8M322 446.5h4M219 447.5h12M326 447.5h4M181 448.5h38M330 448.5h7M172 449.5h9M337 449.5h12M164 450.5h8M349 450.5h4M158 451.5h6M353 451.5h5M558 451.5h36M154 452.5h4M358 452.5h5M535 452.5h23M594 452.5h11M152 453.5h2M363 453.5h4M530 453.5h5M605 453.5h21M69 454.5h20M149 454.5h3M367 454.5h2M524 454.5h6M626 454.5h3M57 455.5h12M89 455.5h6M145 455.5h4M369 455.5h3M519 455.5h5M629 455.5h4M48 456.5h9M95 456.5h5M141 456.5h4M372 456.5h2M517 456.5h2M633 456.5h4M22 457.5h12M42 457.5h6M100 457.5h5M137 457.5h4M374 457.5h2M515 457.5h2M637 457.5h2M10 458.5h12M34 458.5h8M105 458.5h7M135 458.5h2M376 458.5h2M513 458.5h2M639 458.5h2M4 459.5h6M112 459.5h23M378 459.5h3M511 459.5h2M641 459.5h2M381 460.5h3M509 460.5h2M643 460.5h2M384 461.5h2M507 461.5h2M645 461.5h1M386 462.5h2M505 462.5h2M646 462.5h2M388 463.5h2M503 463.5h2M648 463.5h2M390 464.5h2M501 464.5h2M650 464.5h1M392 465.5h2M499 465.5h2M651 465.5h2M394 466.5h3M497 466.5h2M653 466.5h2M397 467.5h1M495 467.5h2M655 467.5h2M398 468.5h5M492 468.5h3M657 468.5h2M403 469.5h6M417 469.5h12M489 469.5h3M659 469.5h3M409 470.5h8M429 470.5h9M485 470.5h4M662 470.5h4M438 471.5h6M453 471.5h11M476 471.5h9M666 471.5h3M444 472.5h9M464 472.5h12M669 472.5h3M672 473.5h3M675 474.5h2M677 475.5h2M679 476.5h3M682 477.5h2M684 478.5h2M686 479.5h2M688 480.5h2M690 481.5h2M692 482.5h2M694 483.5h3M697 484.5h4M701 485.5h5M706 486.5h6M712 487.5h6M718 488.5h5M723 489.5h6M754 489.5h11M729 490.5h25M765 490.5h5" fill="none" stroke="#ffffff" stroke-width="1"/>
<path d="M290 443.5h36M278 444.5h12M326 444.5h11M269 445.5h9M337 445.5h12M264 446.5h5M349 446.5h4M254 447.5h10M353 447.5h8M243 448.5h11M361 448.5h6M232 449.5h11M367 449.5h4M219 450.5h13M371 450.5h4M208 451.5h11M375 451.5h4M185 452.5h23M379 452.5h4M176 453.5h9M383 453.5h4M170 454.5h6M387 454.5h7M590 454.5h44M159 455.5h11M394 455.5h8M578 455.5h12M634 455.5h8M153 456.5h6M402 456.5h4M572 456.5h6M642 456.5h6M80 457.5h33M147 457.5h6M406 457.5h4M560 457.5h12M648 457.5h5M69 458.5h11M113 458.5h34M410 458.5h4M555 458.5h5M653 458.5h5M57 459.5h12M414 459.5h4M549 459.5h6M658 459.5h4M45 460.5h12M418 460.5h4M543 460.5h6M662 460.5h4M34 461.5h11M422 461.5h4M537 461.5h6M666 461.5h6M22 462.5h12M426 462.5h6M531 462.5h6M672 462.5h6M10 463.5h12M432 463.5h6M525 463.5h6M678 463.5h3M4 464.5h6M438 464.5h6M520 464.5h5M681 464.5h3M444 465.5h9M515 465.5h5M684 465.5h3M453 466.5h11M510 466.5h5M687 466.5h3M464 467.5h12M497 467.5h13M690 467.5h4M476 468.5h21M694 468.5h4M698 469.5h3M701 470.5h3M704 471.5h3M707 472.5h3M710 473.5h3M713 474.5h5M718 475.5h5M723 476.5h4M727 477.5h3M730 478.5h5M735 479.5h6M741 480.5h5M746 481.5h6M752 482.5h6M758 483.5h5M763 484.5h7" fill="none" stroke="#ffff00" stroke-width="1"/>
<rect x="4" y="459" width="1" height="11" fill="#ff3232"/>
<rect x="15" y="460" width="1" height="10" fill="#ff3232"/>
<rect x="27" y="461" width="1" height="9" fill="#ff3232"/>
<rect x="39" y="464" width="1" height="6" fill="#ff3232"/>
<rect x="50" y="462" width="1" height="8" fill="#ff3232"/>
<rect x="62" y="462" width="1" height="8" fill="#ff3232"/>
<rect x="74" y="463" width="1" height="7" fill="#ff3232"/>
<rect x="85" y="464" width="1" height="6" fill="#ff3232"/>
<rect x="97" y="468" width="1" height="2" fill="#ff3232"/>
<rect x="109" y="469" width="1" height="2" fill="#54ffff"/>
<rect x="120" y="470" width="1" height="1" fill="#54ffff"/>
<rect x="143" y="468" width="1" height="2" fill="#ff3232"/>
<rect x="155" y="461" width="1" height="9" fill="#ff3232"/>
<rect x="167" y="460" width="1" height="10" fill="#ff3232"/>
<rect x="178" y="461" width="1" height="9" fill="#ff3232"/>
<rect x="190" y="461" width="1" height="9" fill="#ff3232"/>
<rect x="202" y="462" width="1" height="8" fill="#ff3232"/>
<rect x="213" y="463" width="1" height="7" fill="#ff3232"/>
<rect x="225" y="464" width="1" height="6" fill="#ff3232"/>
<rect x="237" y="463" width="1" height="7" fill="#ff3232"/>
<rect x="248" y="460" width="1" height="10" fill="#ff3232"/>
<rect x="260" y="459" width="1" height="11" fill="#ff3232"/>
<rect x="271" y="458" width="1" height="12" fill="#ff3232"/>
<rect x="283" y="461" width="1" height="9" fill="#ff3232"/>
<rect x="295" y="462" width="1" height="8" fill="#ff3232"/>
<rect x="318" y="469" width="1" height="4" fill="#54ffff"/>
<rect x="330" y="469" width="1" height="7" fill="#54ffff"/>
<rect x="341" y="469" width="1" height="7" fill="#54ffff"/>
<rect x="353" y="469" width="1" height="8" fill="#54ffff"/>
<rect x="365" y="469" width="1" height="12" fill="#54ffff"/>
<rect x="376" y="469" width="1" height="17" fill="#54ffff"/>
<rect x="388" y="469" width="1" height="21" fill="#54ffff"/>
<rect x="399" y="469" width="1" height="25" fill="#54ffff"/>
<rect x="411" y="469" width="1" height="23" fill="#54ffff"/>
<rect x="423" y="469" width="1" height="17" fill="#54ffff"/>
<rect x="434" y="469" width="1" height="16" fill="#54ffff"/>
<rect x="446" y="469" width="1" height="15" fill="#54ffff"/>
<rect x="458" y="469" width="1" height="11" fill="#54ffff"/>
<rect x="469" y="469" width="1" height="10" fill="#54ffff"/>
<rect x="481" y="469" width="1" height="7" fill="#54ffff"/>
<rect x="504" y="462" width="1" height="8" fill="#ff3232"/>
<rect x="516" y="453" width="1" height="17" fill="#ff3232"/>
<rect x="527" y="454" width="1" height="16" fill="#ff3232"/>
<rect x="539" y="453" width="1" height="17" fill="#ff3232"/>
<rect x="551" y="457" width="1" height="13" fill="#ff3232"/>
<rect x="562" y="457" width="1" height="13" fill="#ff3232"/>
<rect x="574" y="459" width="1" height="11" fill="#ff3232"/>
<rect x="586" y="463" width="1" height="7" fill="#ff3232"/>
<rect x="597" y="465" width="1" height="5" fill="#ff3232"/>
<rect x="609" y="467" width="1" height="3" fill="#ff3232"/>
<rect x="620" y="468" width="1" height="2" fill="#ff3232"/>
<rect x="632" y="469" width="1" height="2" fill="#54ffff"/>
<rect x="644" y="469" width="1" height="9" fill="#54ffff"/>
<rect x="655" y="469" width="1" height="19" fill="#54ffff"/>
<rect x="667" y="469" width="1" height="21" fill="#54ffff"/>
<rect x="679" y="469" width="1" height="24" fill="#54ffff"/>
<rect x="690" y="469" width="1" height="29" fill="#54ffff"/>
<rect x="702" y="469" width="1" height="29" fill="#54ffff"/>
<rect x="714" y="469" width="1" height="26" fill="#54ffff"/>
<rect x="725" y="469" width="1" height="24" fill="#54ffff"/>
<rect x="737" y="469" width="1" height="21" fill="#54ffff"/>
<rect x="748" y="469" width="1" height="17" fill="#54ffff"/>
<rect x="760" y="469" width="1" height="12" fill="#54ffff"/>
<line x1="0" y1="469.5" x2="770" y2="469.5" stroke="#3a3a3a" stroke-width="1" stroke-dasharray="1 1"/>
<rect x="517" y="26" width="3" height="1" fill="#d0d0d0"/>
<rect x="516" y="27" width="1" height="1" fill="#d0d0d0"/>
<rect x="516" y="28" width="4" height="1" fill="#d0d0d0"/>
<rect x="516" y="29" width="1" height="1" fill="#d0d0d0"/>
<rect x="520" y="29" width="3" height="1" fill="#d0d0d0"/>
<rect x="517" y="30" width="1" height="1" fill="#d0d0d0"/>
<rect x="523" y="30" width="3" height="1" fill="#d0d0d0"/>
<rect x="518" y="31" width="1" height="1" fill="#d0d0d0"/>
<rect x="526" y="31" width="2" height="1" fill="#d0d0d0"/>
<g shape-rendering="auto"><circle cx="96" cy="14" r="6" fill="#7f7f7f"/><path d="M93 12.7 L96 15.6 L99 12.7" fill="none" stroke="#101018" stroke-width="1.15"/></g>
<g shape-rendering="auto"><circle cx="6.8" cy="425.8" r="6" fill="#7f7f7f"/><path d="M3.8 424.5 L6.8 427.40000000000003 L9.8 424.5" fill="none" stroke="#101018" stroke-width="1.15"/></g>
</svg>
<div id="hdr">
<span class="t" style="left:2px;color:#d2d2d2">拓邦股份<span style="margin-left:-1.3px"> (</span><span style="margin-left:-0.6px">日线)</span></span>
<span class="t" id="l5" style="left:107px;letter-spacing:0.18px;color:#ffffff">MA5: 12.82</span>
<span class="t" id="l10" style="left:176.3px;letter-spacing:0.31px;color:#ffff00">MA10: 12.98</span>
<span class="t" id="l20" style="left:253.6px;letter-spacing:0.26px;color:#ff00ff">MA20: 13.35</span>
<span class="t" id="l60" style="left:330.8px;letter-spacing:0.23px;color:#00ff00">MA60: 14.31</span>
<span class="t" id="l120" style="left:408px;letter-spacing:0.18px;color:#c0c0c0">MA120: 14.22</span>
<span class="t" id="l250" style="left:491.2px;letter-spacing:0.25px;color:#0000ff">MA250: 14.24</span>
</div>
<span class="t" id="hi" style="left:531px;letter-spacing:-0.05px;top:27px;color:#c8c8c8">16.95</span>
<div id="mac">
<span class="t" id="m1" style="left:17.3px;letter-spacing:0.08px;color:#c8c8c8">MACD(12,26,9)</span>
<span class="t" id="m2" style="left:108.3px;letter-spacing:0.04px;color:#ffffff">DIF: -0.39</span>
<span class="t" id="m3" style="left:168.6px;color:#ffff00">DEA: -0.37</span>
<span class="t" id="m4" style="left:233.3px;letter-spacing:0.23px;color:#ff00ff">MACD: -0.03</span>
</div>
<div class="badge"><span>财</span></div>
</body>
</html>
